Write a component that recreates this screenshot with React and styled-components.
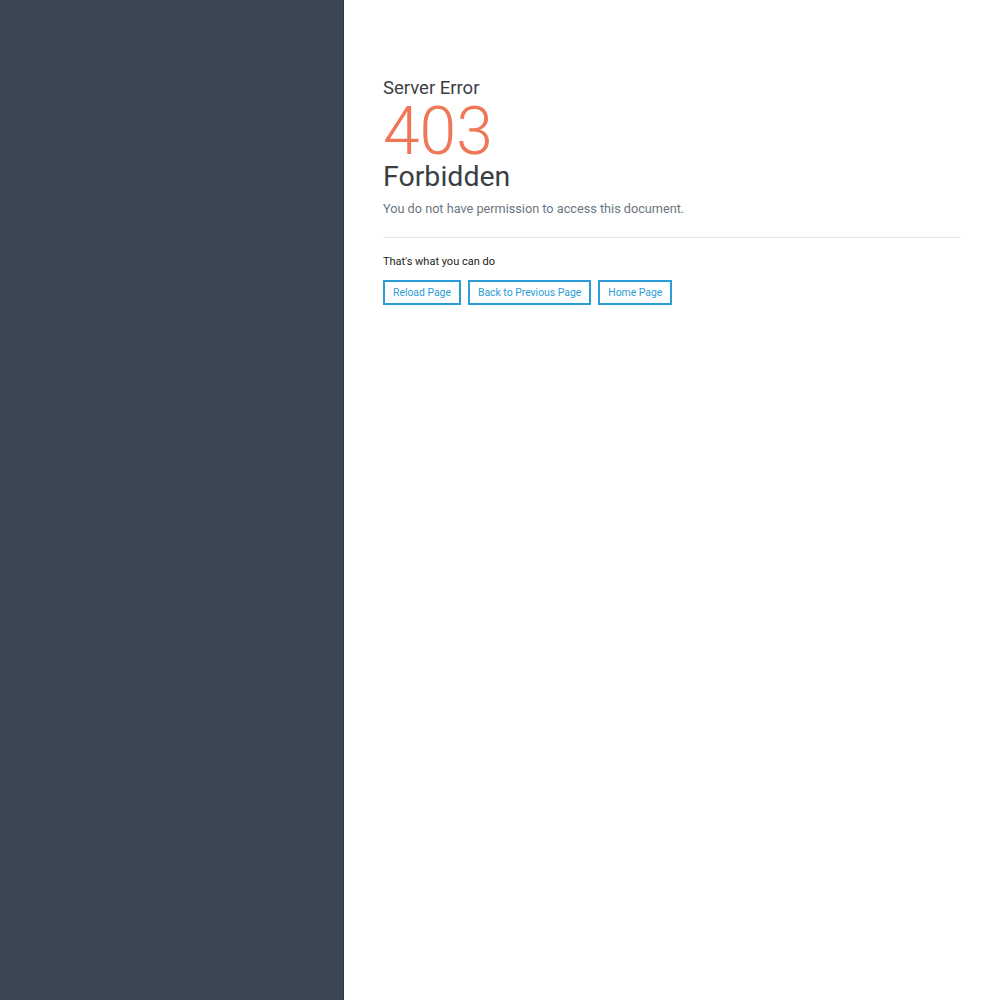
import styled, { createGlobalStyle } from "styled-components";

const GlobalStyle = createGlobalStyle`
  html, body {
    margin: 0;
    padding: 0;
    height: 100%;
  }
  body {
    font-family: Roboto, "Liberation Sans", Arial, sans-serif;
    background: #fff;
  }
`;

const Page = styled.div`
  display: flex;
  min-height: 1000px;
`;
const Sidebar = styled.aside`
  width: 343px;
  flex-shrink: 0;
  background-color: #3a4651;
  border-right: 1px solid #2a333c;
`;
const Main = styled.main`
  flex: 1;
  padding: 78px 39px 0 39px;
`;
const Kicker = styled.div`
  font-size: 18.5px;
  font-weight: 400;
  color: #3a3f45;
  line-height: 20px;
`;
const Code = styled.div`
  font-size: 66px;
  font-weight: 300;
  color: #ef7656;
  line-height: 56px;
  margin-top: 6px;
`;
const Title = styled.h1`
  font-size: 28.5px;
  font-weight: 400;
  color: #3a3f45;
  line-height: 34px;
  margin: 0;
`;
const Message = styled.p`
  font-size: 12.7px;
  color: #6a7580;
  margin: 6px 0 0;
  line-height: 18px;
`;
const Divider = styled.hr`
  border: none;
  border-top: 1px solid #e3e6e8;
  margin: 19px 0 0;
`;
const Hint = styled.div`
  font-size: 11px;
  color: #222;
  margin-top: 17px;
  line-height: 14px;
`;
const Actions = styled.div`
  display: flex;
  gap: 7px;
  margin-top: 11px;
`;
const ActionButton = styled.button`
  height: 25px;
  padding: 0 8px;
  border: 2px solid #2b9cd6;
  background: transparent;
  color: #2b9cd6;
  font-family: inherit;
  font-size: 10.4px;
  cursor: pointer;
`;

const App = () => {
  return (
    <Page>
      <GlobalStyle />
      <Sidebar />
      <Main>
        <Kicker>Server Error</Kicker>
        <Code>403</Code>
        <Title>Forbidden</Title>
        <Message>You do not have permission to access this document.</Message>
        <Divider />
        <Hint>That's what you can do</Hint>
        <Actions>
          <ActionButton>Reload Page</ActionButton>
          <ActionButton>Back to Previous Page</ActionButton>
          <ActionButton>Home Page</ActionButton>
        </Actions>
      </Main>
    </Page>
  );
};

export default App;
